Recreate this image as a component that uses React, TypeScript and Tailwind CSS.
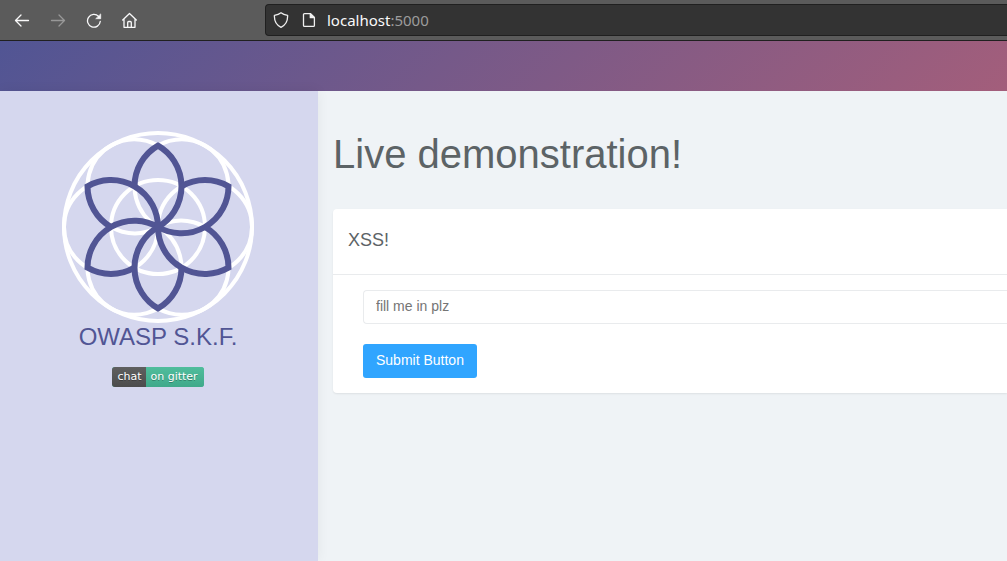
import type { ReactNode } from "react";

const ANGLES = [0, 60, 120, 180, 240, 300];

function SeedLogo() {
  return (
    <svg viewBox="-96 -96 192 192" className="size-48" fill="none" role="img" aria-label="OWASP S.K.F. logo">
      <g stroke="#ffffff" strokeWidth="4">
        <circle r="94" />
        <circle r="47" />
        {ANGLES.map((a) => (
          <circle key={a} cx="47" r="47" transform={`rotate(${a})`} />
        ))}
      </g>
      <g stroke="#515594" strokeWidth="6">
        {ANGLES.map((a) => (
          <path
            key={a}
            d="M-23.5 -40.7A47 47 0 0 1 0 -81.4A47 47 0 0 1 0 0"
            transform={`rotate(${a})`}
          />
        ))}
      </g>
    </svg>
  );
}

function ToolButton({ label, disabled, children }: { label: string; disabled?: boolean; children: ReactNode }) {
  return (
    <button type="button" aria-label={label} disabled={disabled} className="text-[#f9f9fa] disabled:text-[#989898]">
      <svg
        viewBox="0 0 16 16"
        className="block size-4"
        fill="none"
        stroke="currentColor"
        strokeWidth="1.3"
        strokeLinecap="round"
        strokeLinejoin="round"
      >
        {children}
      </svg>
    </button>
  );
}

function BrowserBar() {
  return (
    <div className="flex h-[41px] items-center border-b border-[#202020] bg-[#5b5b5b]">
      <div className="flex w-[265px] shrink-0 gap-5 pl-[14px]">
        <ToolButton label="Back">
          <path d="M14.5 8.5H1.5M7 3L1.5 8.5L7 14" />
        </ToolButton>
        <ToolButton label="Forward" disabled>
          <path d="M1.5 8.5H14.5M9 3L14.5 8.5L9 14" />
        </ToolButton>
        <ToolButton label="Reload">
          <path d="M12.6 4.4A6.4 6.4 0 1 0 14.3 9.3" />
          <path d="M14.7 2.3V6.7H10.1Z" fill="currentColor" strokeWidth="0.7" />
        </ToolButton>
        <ToolButton label="Home">
          <path d="M0.7 8L7.5 1.5L14.3 8M2 7V15.3H13V7M5.7 15V10.5A1 1 0 0 1 6.7 9.5H8.3A1 1 0 0 1 9.3 10.5V15" />
        </ToolButton>
      </div>
      <div className="flex h-8 flex-1 items-center rounded-l border border-r-0 border-[#202020] bg-[#333333] pl-[7px] text-[#f0f0f0]">
        <svg viewBox="0 0 16 16" className="size-4 shrink-0" fill="none" stroke="currentColor" strokeWidth="1.3" strokeLinejoin="round">
          <path d="M8 0.8C9.8 2.3 12 3 14.6 3.3C14.9 9 12.8 13 8 15.3C3.2 13 1.1 9 1.4 3.3C4 3 6.2 2.3 8 0.8Z" />
        </svg>
        <svg viewBox="0 0 16 16" className="ml-3 size-4 shrink-0" fill="none" stroke="currentColor" strokeWidth="1.3" strokeLinejoin="round">
          <path d="M3.5 1.6H9.5L13.4 5.5V13.4A1 1 0 0 1 12.4 14.4H3.5A1 1 0 0 1 2.5 13.4V2.6A1 1 0 0 1 3.5 1.6Z" />
          <path d="M9.3 1.6V5.7H13.4Z" fill="currentColor" />
        </svg>
        <div
          role="textbox"
          aria-label="Address"
          tabIndex={0}
          className="ml-[10px] font-['Noto_Sans','Open_Sans',sans-serif] text-[15px] leading-5 text-[#9c9c9c]"
        >
          <span className="text-[#f9f9fa]">localhost</span>:5000
        </div>
      </div>
    </div>
  );
}

function GitterBadge() {
  return (
    <a
      href="#gitter"
      className="flex h-5 overflow-hidden rounded-[3px] bg-[#46bc99] font-['DejaVu_Sans',sans-serif] text-[11px] leading-5 text-white [text-shadow:0_1px_0_rgb(1_1_1/0.3)]"
    >
      <span className="bg-linear-to-b from-[#5f5f5f] to-[#4c4c4c] px-[5px]">chat</span>
      <span className="bg-linear-to-b from-[#50bd9c] to-[#40a98a] pr-[6px] pl-1">on gitter</span>
    </a>
  );
}

export default function App() {
  return (
    <div className="flex min-h-screen flex-col bg-[#eff3f6] font-['Liberation_Sans',Arial,sans-serif] text-[#5c6366]">
      <BrowserBar />
      <header className="h-[50px] bg-linear-[135deg,#515594,#a35e7b]" />
      <div className="flex flex-1">
        <aside className="flex w-[318px] shrink-0 flex-col items-center bg-[#d5d7ee] pt-10 pr-[2px] shadow-[0_0_12px_rgb(0_0_0/0.06)]">
          <SeedLogo />
          <p className="text-2xl leading-7 text-[#515594]">OWASP S.K.F.</p>
          <div className="mt-4">
            <GitterBadge />
          </div>
        </aside>
        <main className="min-w-0 flex-1 pt-10 pl-[15px]">
          <h1 className="text-[40px] leading-[46px]">Live demonstration!</h1>
          <section className="mt-8 rounded-l bg-white shadow-[0_1px_2px_rgb(0_0_0/0.08)]">
            <h2 className="border-b border-[#e9ebed] px-[15px] pt-5 pb-[23px] text-lg leading-[22px]">XSS!</h2>
            <form className="py-[15px] pl-[30px]" onSubmit={(e) => e.preventDefault()}>
              <input
                type="text"
                aria-label="fill me in plz"
                placeholder="fill me in plz"
                className="block h-[34px] w-full rounded-l border border-r-0 border-[#e9ebed] bg-white px-3 pb-[2px] text-sm placeholder:text-[#757575]"
              />
              <button type="submit" className="mt-5 block h-[34px] rounded-[3px] bg-[#30a5ff] px-[13px] pb-[2px] text-sm text-white">
                Submit Button
              </button>
            </form>
          </section>
        </main>
      </div>
    </div>
  );
}
